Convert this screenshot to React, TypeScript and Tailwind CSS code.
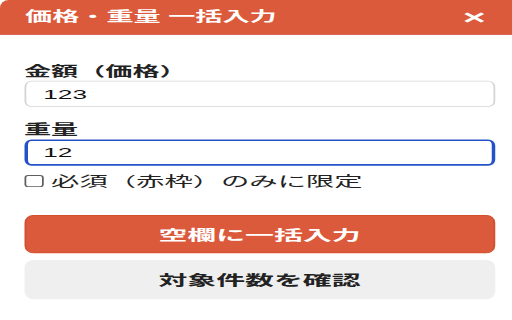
import React from 'react';

// The reference is stretched wide, so the panel is laid out narrow and scaled.
export default function App() {
  return (
    <div className="w-[512px] h-[320px] overflow-hidden bg-white">
      <div className="w-[292.6px] h-[376.5px] origin-top-left scale-x-[1.75] scale-y-[0.85] bg-white font-['Liberation_Sans','Noto_Sans_CJK_JP',sans-serif]">
        <header className="h-[41px] bg-[#dc5a3c] border-b border-[#c4432b] rounded-tl-[5px_9px] flex items-center justify-between pl-[14.3px] pr-[16px]">
          <h1 className="text-white font-bold text-[15.5px] leading-[20px]">価格・重量 一括入力</h1>
          <button className="text-white">
            <svg width="12" height="13" viewBox="0 0 12 13">
              <path d="M1.2 1.5 L10.8 11.5 M10.8 1.5 L1.2 11.5" stroke="white" strokeWidth="2.6" />
            </svg>
          </button>
        </header>

        <main className="pl-[13.7px] pr-[9.7px] pt-[32.5px]">
          <div>
            <label className="block text-[15.5px] leading-[20px] font-bold text-[#222] mb-[1px]">金額（価格）</label>
            <input
              type="text"
              value="123"
              readOnly
              className="w-full h-[31.4px] pl-[10px] border border-[#d4d4d4] rounded-[4px/7px] text-[15px] text-[#111] outline-none"
            />
          </div>

          <div className="mt-[17px]">
            <label className="block text-[15.5px] leading-[20px] font-bold text-[#222] mb-[1px]">重量</label>
            <input
              type="text"
              value="12"
              readOnly
              className="w-full h-[31px] pl-[9px] border-2 border-[#2453c7] rounded-[4px/7px] text-[15px] text-[#111] outline-none"
            />
          </div>

          <label className="mt-[8px] flex items-center h-[20px] text-[16.2px] text-[#222]">
            <span className="block w-[10.5px] h-[13.5px] ml-[0.5px] border-[1.2px] border-[#5f5f5f] rounded-[2px/3px] bg-white shrink-0"></span>
            <span className="ml-[4.5px] leading-[20px]">必須（赤枠）のみに限定</span>
          </label>

          <button className="mt-[30.5px] w-full h-[45px] bg-[#dc5a3c] border border-[#d2502f] rounded-[5px/9px] text-white font-bold text-[16.5px]">
            空欄に一括入力
          </button>
          <button className="mt-[8px] w-full h-[46px] bg-[#efefef] rounded-[5px/9px] text-[#222] font-bold text-[16.5px]">
            対象件数を確認
          </button>
        </main>
      </div>
    </div>
  );
}
